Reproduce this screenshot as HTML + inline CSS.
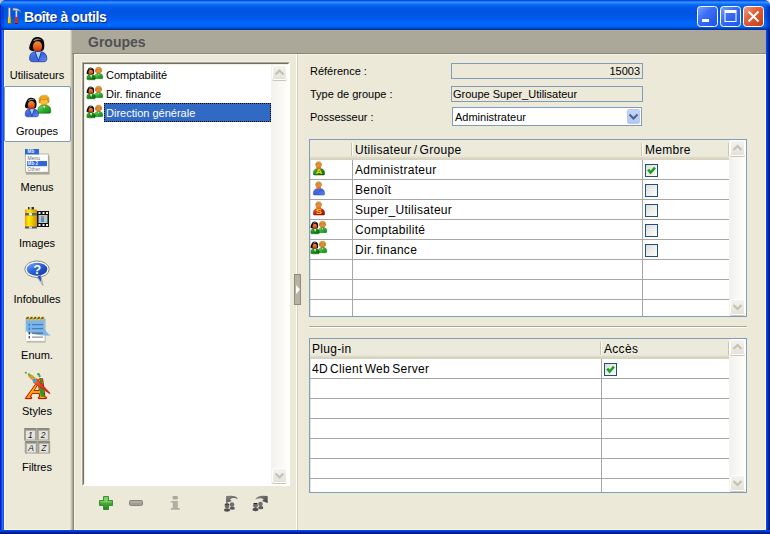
<!DOCTYPE html><html><head><meta charset="utf-8"><style>
*{box-sizing:border-box}
html,body{margin:0;padding:0;width:770px;height:534px;overflow:hidden;background:#c8c8c8}
body{font-family:"Liberation Sans",sans-serif;font-size:11px;color:#000;position:relative}
.a{position:absolute}
.t{position:absolute;white-space:nowrap;line-height:13px}
svg.i{position:absolute;overflow:visible}
</style></head><body>
<svg width="0" height="0" style="position:absolute"><defs>
<linearGradient id="gFace" x1="0" y1="0" x2="0" y2="1"><stop offset="0" stop-color="#f29038"/><stop offset="0.55" stop-color="#e25a1a"/><stop offset="1" stop-color="#c02008"/></linearGradient>
<linearGradient id="gFaceY" x1="0" y1="0" x2="0" y2="1"><stop offset="0" stop-color="#ffd050"/><stop offset="1" stop-color="#ffa820"/></linearGradient>
<linearGradient id="gFaceO" x1="0" y1="0" x2="0" y2="1"><stop offset="0" stop-color="#f8a848"/><stop offset="1" stop-color="#e06818"/></linearGradient>
<linearGradient id="gBlue" x1="0" y1="0" x2="1" y2="1"><stop offset="0" stop-color="#5a80e8"/><stop offset="0.5" stop-color="#3a62dc"/><stop offset="1" stop-color="#6a8cf0"/></linearGradient>
<linearGradient id="gGreen" x1="0" y1="0" x2="1" y2="1"><stop offset="0" stop-color="#80e070"/><stop offset="0.5" stop-color="#30b030"/><stop offset="1" stop-color="#108010"/></linearGradient>
<linearGradient id="gGreenD" x1="0" y1="0" x2="1" y2="1"><stop offset="0" stop-color="#50c050"/><stop offset="0.5" stop-color="#168a16"/><stop offset="1" stop-color="#056005"/></linearGradient>
<linearGradient id="gRed" x1="0" y1="0" x2="1" y2="1"><stop offset="0" stop-color="#f06050"/><stop offset="0.5" stop-color="#c81818"/><stop offset="1" stop-color="#900808"/></linearGradient>
<linearGradient id="gHairY" x1="0" y1="0" x2="0" y2="1"><stop offset="0" stop-color="#ffc030"/><stop offset="1" stop-color="#e08a00"/></linearGradient>
<linearGradient id="gHairB" x1="0" y1="0" x2="0" y2="1"><stop offset="0" stop-color="#e8b050"/><stop offset="1" stop-color="#b07020"/></linearGradient>
<linearGradient id="gBubble" x1="0" y1="0" x2="1" y2="1"><stop offset="0" stop-color="#80b0ff"/><stop offset="0.45" stop-color="#2c64d8"/><stop offset="1" stop-color="#0c30a0"/></linearGradient>
<linearGradient id="gYel" x1="0" y1="0" x2="1" y2="0"><stop offset="0" stop-color="#ff9800"/><stop offset="0.3" stop-color="#fff000"/><stop offset="1" stop-color="#d09000"/></linearGradient>
<linearGradient id="gArr" x1="0" y1="0" x2="1" y2="1"><stop offset="0" stop-color="#8a8a8a"/><stop offset="1" stop-color="#404040"/></linearGradient>
<linearGradient id="gStyA" x1="0" y1="0" x2="1" y2="0"><stop offset="0" stop-color="#ff8a00"/><stop offset="0.5" stop-color="#ffc000"/><stop offset="1" stop-color="#f0a000"/></linearGradient>
<linearGradient id="gBrush" x1="0" y1="0" x2="1" y2="0"><stop offset="0" stop-color="#ff6040"/><stop offset="1" stop-color="#c01000"/></linearGradient>
<linearGradient id="gPlus" x1="0" y1="0" x2="0" y2="1"><stop offset="0" stop-color="#70d050"/><stop offset="1" stop-color="#1c8a1c"/></linearGradient>
<linearGradient id="gClose" x1="0" y1="0" x2="1" y2="1"><stop offset="0" stop-color="#f2a38c"/><stop offset="0.4" stop-color="#e2603a"/><stop offset="1" stop-color="#c43c12"/></linearGradient>
<linearGradient id="gBtn" x1="0" y1="0" x2="1" y2="1"><stop offset="0" stop-color="#7ea6ff"/><stop offset="0.4" stop-color="#3a6ef5"/><stop offset="1" stop-color="#1c52e6"/></linearGradient>
</defs></svg>
<div class="a" style="left:0px;top:0px;width:10px;height:10px;background:#c0c0c0"></div>
<div class="a" style="left:760px;top:0px;width:10px;height:10px;background:#ebe8d8"></div>
<div class="a" style="left:0;top:0;width:770px;height:534px;border-radius:6px 6px 0 0;overflow:hidden;background:#0a46e0">
<div class="a" style="left:0px;top:0px;width:770px;height:30px;background:linear-gradient(to bottom,#0041d4 0px,#0a5cf5 1px,#3d95ff 2px,#2a88ff 3px,#1170fa 4px,#0362ee 6px,#0058e6 8px,#0055e3 14px,#0059ea 18px,#0064f8 22px,#0068fd 25px,#0060ef 27px,#004fd2 28px,#0036a8 29px,#0036a8 30px)"></div>
<div class="a" style="left:0px;top:5px;width:1px;height:25px;background:#0020c8"></div>
<div class="a" style="left:1px;top:6px;width:3px;height:24px;background:rgba(0,30,190,0.35)"></div>
<div class="a" style="left:766px;top:6px;width:4px;height:24px;background:linear-gradient(to right,rgba(0,40,200,0.2),rgba(0,20,120,0.6))"></div>
<div class="a" style="left:0px;top:30px;width:4px;height:504px;background:linear-gradient(to right,#0019c8 0,#0019c8 1px,#0846e4 1px,#0846e4 2px,#2d6cf2 2px,#2d6cf2 3px,#1554ea 3px)"></div>
<div class="a" style="left:766px;top:30px;width:4px;height:504px;background:linear-gradient(to right,#0046f5 0,#0046f5 1px,#0036cc 1px,#0036cc 2px,#00279e 2px,#00279e 3px,#00196e 3px)"></div>
<div class="a" style="left:0px;top:530px;width:770px;height:4px;background:linear-gradient(to bottom,#0046f5 0,#0046f5 1px,#0036cc 1px,#0036cc 2px,#00279e 2px,#00279e 3px,#00196e 3px)"></div>
</div>
<svg class="i" style="left:6px;top:7px" width="16" height="18" viewBox="0 0 16 18"><rect x="2.3" y="0.8" width="2" height="10" fill="#e8e8f0" stroke="#806878" stroke-width="0.5"/><rect x="1.9" y="9.8" width="3" height="7" rx="0.6" fill="url(#gYel)"/><rect x="1.9" y="16" width="3" height="1" fill="#c05000"/><path d="M7,1 L7,3.5 L8.8,3.3 L12,3.6 C13.2,3.8 14.5,4.8 15,5.8 C14.6,3.6 13,1.6 10.5,1.4 L8.8,1.2 Z" fill="#dcdce4" stroke="#806878" stroke-width="0.5"/><rect x="9.6" y="3.4" width="1.6" height="7" fill="#e0e0e8"/><rect x="9.1" y="9.8" width="2.7" height="7" fill="#d83010"/><rect x="9.1" y="16" width="2.7" height="1" fill="#701000"/></svg>
<div class="t" style="left:24px;top:9px;font-size:14px;letter-spacing:-0.4px;font-weight:bold;color:#fff;text-shadow:1px 1px 0 #0a2890;line-height:16px">Boîte à outils</div>
<svg class="i" style="left:697px;top:6px" width="21" height="21" viewBox="0 0 21 21"><rect x="0.5" y="0.5" width="20" height="20" rx="3" fill="url(#gBtn)" stroke="#fff"/><rect x="5" y="13" width="7" height="3" fill="#fff"/></svg>
<svg class="i" style="left:720px;top:6px" width="21" height="21" viewBox="0 0 21 21"><rect x="0.5" y="0.5" width="20" height="20" rx="3" fill="url(#gBtn)" stroke="#fff"/><rect x="5" y="4.5" width="11" height="11" fill="none" stroke="#fff" stroke-width="1"/><rect x="5" y="4.5" width="11" height="2.5" fill="#fff"/></svg>
<svg class="i" style="left:743px;top:6px" width="21" height="21" viewBox="0 0 21 21"><rect x="0.5" y="0.5" width="20" height="20" rx="3" fill="url(#gClose)" stroke="#fff"/><path d="M5.5,5.5 L15.5,15.5 M15.5,5.5 L5.5,15.5" stroke="#fff" stroke-width="2"/></svg>
<div class="a" style="left:4px;top:30px;width:762px;height:500px;background:#ece9d8"></div>
<div class="a" style="left:4px;top:30px;width:1px;height:500px;background:#fff8e4"></div>
<div class="a" style="left:4px;top:30px;width:66px;height:1px;background:#fff8e4"></div>
<div class="a" style="left:765px;top:30px;width:1px;height:500px;background:#fff8e4"></div>
<div class="a" style="left:4px;top:529px;width:762px;height:1px;background:#fff8e4"></div>
<div class="a" style="left:70px;top:30px;width:1px;height:500px;background:#ddd9c8"></div>
<div class="a" style="left:71px;top:30px;width:1px;height:500px;background:#c5c2b2"></div>
<div class="a" style="left:72px;top:30px;width:1px;height:500px;background:#aca899"></div>
<div class="a" style="left:73px;top:53px;width:1px;height:477px;background:#8a8775"></div>
<div class="a" style="left:72px;top:30px;width:694px;height:23px;background:#aca899"></div>
<div class="a" style="left:72px;top:53px;width:694px;height:1px;background:#8a8775"></div>
<div class="a" style="left:74px;top:54px;width:692px;height:1px;background:#f6f4ea"></div>
<div class="a" style="left:74px;top:54px;width:1px;height:476px;background:#f6f4ea"></div>
<div class="t" style="left:88px;top:34px;font-size:14px;font-weight:bold;color:#505055;line-height:16px">Groupes</div>
<div class="a" style="left:4px;top:86px;width:67px;height:56px;background:#fff;border:1px solid #7e9cb8;border-radius:2px"></div>
<div class="t" style="left:4px;width:66px;text-align:center;top:69px">Utilisateurs</div>
<div class="t" style="left:4px;width:66px;text-align:center;top:125px">Groupes</div>
<div class="t" style="left:4px;width:66px;text-align:center;top:181px">Menus</div>
<div class="t" style="left:4px;width:66px;text-align:center;top:237px">Images</div>
<div class="t" style="left:4px;width:66px;text-align:center;top:293px">Infobulles</div>
<div class="t" style="left:4px;width:66px;text-align:center;top:349px">Enum.</div>
<div class="t" style="left:4px;width:66px;text-align:center;top:405px">Styles</div>
<div class="t" style="left:4px;width:66px;text-align:center;top:461px">Filtres</div>
<svg class="i" style="left:28px;top:36px" width="20" height="26" viewBox="0 0 20 26"><path d="M5,15 C2.5,15 0.8,13.5 1.2,11.5 C1.6,9 2.5,7 3.5,5 C4.5,2.5 6.5,1 9,1 C12.5,1 15.5,2.8 16,6 C16.5,9 16.5,12.5 15.5,14 C14.5,15 13,15 12,15 Z" fill="#0a0a0a"/><path d="M5.5,4.5 C7,2.3 11,2 13.8,4 C11.5,3.5 8,3.8 5.5,5.5 Z" fill="#8a8a8a"/><path d="M9.5,5.3 C12.3,5.3 14,7.3 14,10.3 C14,13.8 12,16.5 9.5,16.5 C7,16.5 5,13.8 5,10.3 C5,7.3 6.8,5.3 9.5,5.3 Z" fill="url(#gFace)"/><path d="M1.6,22.3 C1.6,18.5 3.4,16.1 6.5,15.7 L13,15.7 C16.4,16.1 18.8,18.5 18.8,22.3 C18.8,24.6 17.8,25.7 16,25.7 L4.4,25.7 C2.6,25.7 1.6,24.6 1.6,22.3 Z" fill="url(#gBlue)" stroke="#18389a" stroke-width="0.8"/><path d="M7.6,15.9 L10.3,23.5 L13,15.9 Z" fill="#a8dcff"/><path d="M7.2,16 L10.3,25.2 L13.4,16" fill="none" stroke="#18389a" stroke-width="0.8"/></svg>
<svg class="i" style="left:36.56px;top:95.1px" width="14.0" height="18.2" viewBox="0 0 20 26"><path d="M3.2,11.5 C2.2,7 2.8,3 6,1.2 C8,0 12,-0.2 14.5,1 C17.2,2.5 17.8,6.5 16.8,11 Z" fill="url(#gHairY)" stroke="#b86800" stroke-width="0.6"/><ellipse cx="10.1" cy="10.2" rx="5.3" ry="6" fill="url(#gFaceY)"/><path d="M4.2,9 C4,5 6,2.6 10,2.5 C14,2.6 16,5 16,9 C15,7 14.2,6 13.5,5.5 L12.5,7.2 L11.2,5.8 L10,7.4 L8.8,5.8 L7.5,7.2 L6.6,5.8 C5.6,6.5 4.8,7.8 4.2,9 Z" fill="url(#gHairY)" stroke="#b86800" stroke-width="0.5"/><path d="M1.2,25 C0.8,21 1.5,17.5 4.5,15.8 C6,15 7.5,14.6 8.5,14.6 L12,14.6 C13.5,14.6 15,15 16.5,15.8 C19.5,17.5 20,21 19.5,25 C19.2,25.8 18.5,26 18,26 L2.5,26 C1.8,26 1.3,25.6 1.2,25 Z" fill="url(#gGreen)" stroke="#0a6a0a" stroke-width="0.8"/><path d="M8.2,15 L10.2,20.5 L12.2,15 Z" fill="#ffffff" stroke="#0a6a0a" stroke-width="0.5"/></svg>
<svg class="i" style="left:24.3px;top:96.9px" width="15.4" height="20.02" viewBox="0 0 20 26"><path d="M5,15 C2.5,15 0.8,13.5 1.2,11.5 C1.6,9 2.5,7 3.5,5 C4.5,2.5 6.5,1 9,1 C12.5,1 15.5,2.8 16,6 C16.5,9 16.5,12.5 15.5,14 C14.5,15 13,15 12,15 Z" fill="#0a0a0a"/><path d="M5.5,4.5 C7,2.3 11,2 13.8,4 C11.5,3.5 8,3.8 5.5,5.5 Z" fill="#8a8a8a"/><path d="M9.5,5.3 C12.3,5.3 14,7.3 14,10.3 C14,13.8 12,16.5 9.5,16.5 C7,16.5 5,13.8 5,10.3 C5,7.3 6.8,5.3 9.5,5.3 Z" fill="url(#gFace)"/><path d="M1.6,22.3 C1.6,18.5 3.4,16.1 6.5,15.7 L13,15.7 C16.4,16.1 18.8,18.5 18.8,22.3 C18.8,24.6 17.8,25.7 16,25.7 L4.4,25.7 C2.6,25.7 1.6,24.6 1.6,22.3 Z" fill="url(#gBlue)" stroke="#18389a" stroke-width="0.8"/><path d="M7.6,15.9 L10.3,23.5 L13,15.9 Z" fill="#a8dcff"/><path d="M7.2,16 L10.3,25.2 L13.4,16" fill="none" stroke="#18389a" stroke-width="0.8"/></svg>
<svg class="i" style="left:24px;top:148px" width="28" height="28" viewBox="0 0 28 28"><rect x="2" y="8" width="23.5" height="18.5" fill="#8e8a78" opacity="0.75"/><rect x="1.3" y="6" width="23" height="18.2" fill="#fff" stroke="#aaa696" stroke-width="0.8"/><rect x="1" y="1" width="14" height="5.4" fill="#2e68d0"/><text x="3.6" y="5" font-family="Liberation Sans" font-weight="bold" font-size="4.6" fill="#e8f0ff">Mb</text><text x="3.6" y="11.8" font-family="Liberation Sans" font-size="5" fill="#666">Menu</text><rect x="3" y="13" width="20" height="5.2" fill="#2e68d0"/><text x="3.6" y="17.2" font-family="Liberation Sans" font-weight="bold" font-size="4.6" fill="#e8f0ff">Mb 2</text><text x="3.6" y="22.8" font-family="Liberation Sans" font-size="5" fill="#777">Other</text></svg>
<svg class="i" style="left:24px;top:206px" width="26" height="24" viewBox="0 0 26 24"><rect x="13" y="5" width="12" height="16" fill="#111"/><rect x="14.5" y="9" width="9" height="8" fill="#b8c8c8"/><rect x="17" y="10" width="3" height="6" fill="#5090d0"/><rect x="17.5" y="10" width="2" height="2" fill="#e08080"/><rect x="14.5" y="6" width="2" height="2" fill="#eee"/><rect x="18.5" y="6" width="2" height="2" fill="#eee"/><rect x="22" y="6" width="2" height="2" fill="#eee"/><rect x="14.5" y="18" width="2" height="2" fill="#eee"/><rect x="18.5" y="18" width="2" height="2" fill="#eee"/><rect x="22" y="18" width="2" height="2" fill="#eee"/><rect x="4" y="1" width="6" height="3" fill="#333"/><rect x="5.5" y="1" width="2" height="3" fill="#ddd"/><rect x="1" y="3.5" width="12" height="18.5" fill="url(#gYel)"/><rect x="1" y="7" width="12" height="2.5" fill="#606870"/><rect x="5" y="7" width="3" height="2.5" fill="#e8e8e8"/><rect x="1" y="20.5" width="12" height="2" fill="#505860"/><rect x="5" y="20.5" width="3" height="2" fill="#ddd"/></svg>
<svg class="i" style="left:24px;top:260px" width="27" height="27" viewBox="0 0 27 27"><path d="M12,16 L19,25.5 L17,16 Z" fill="#fff" stroke="#9a9890" stroke-width="0.8"/><ellipse cx="13" cy="9.2" rx="12.2" ry="8.2" fill="#fff" stroke="#8a8880" stroke-width="1"/><ellipse cx="13" cy="9.2" rx="10.3" ry="6.5" fill="url(#gBubble)"/><path d="M13.5,17 L17.5,22.5 L16.5,15 Z" fill="#2050c0"/><text x="13.2" y="14.2" font-family="Liberation Sans" font-weight="bold" font-size="13" fill="#fff" text-anchor="middle">?</text></svg>
<svg class="i" style="left:24px;top:316px" width="28" height="28" viewBox="0 0 28 28"><rect x="2.6" y="3" width="19" height="23.6" fill="#908c7a" opacity="0.55"/><rect x="1.8" y="2" width="19" height="23" fill="#fff" stroke="#d0d0d0" stroke-width="0.5"/><path d="M1.8,2 L20.8,2 L20.8,13 C22.5,16 24.5,18.5 27,19.5 L20.8,19.5 C15,19.5 8,18 3,16 L1.8,15 Z" fill="#7ab6ea"/><rect x="8" y="8.2" width="11" height="1" fill="#3a70b0"/><rect x="8" y="12.2" width="11" height="1" fill="#3a70b0"/><rect x="8" y="16.6" width="11" height="1" fill="#555"/><rect x="8" y="20.6" width="11" height="1" fill="#777"/><rect x="4.6" y="7.6" width="1.4" height="2.4" fill="#4a7ab0"/><rect x="4.6" y="11.6" width="1.4" height="2.4" fill="#4a7ab0"/><rect x="4.6" y="16" width="1.4" height="2.4" fill="#333"/><rect x="4.6" y="20" width="1.4" height="2.4" fill="#555"/><rect x="2.4" y="0.4" width="2.4" height="4.2" rx="0.6" fill="#f0c020"/><path d="M2.4,1.8 L4.8,0.8 L4.8,2.2 L2.4,3.2 Z" fill="#3a2a00" opacity="0.8"/><rect x="6.1" y="0.4" width="2.4" height="4.2" rx="0.6" fill="#f0c020"/><path d="M6.1,1.8 L8.5,0.8 L8.5,2.2 L6.1,3.2 Z" fill="#3a2a00" opacity="0.8"/><rect x="9.8" y="0.4" width="2.4" height="4.2" rx="0.6" fill="#f0c020"/><path d="M9.8,1.8 L12.2,0.8 L12.2,2.2 L9.8,3.2 Z" fill="#3a2a00" opacity="0.8"/><rect x="13.500000000000002" y="0.4" width="2.4" height="4.2" rx="0.6" fill="#f0c020"/><path d="M13.500000000000002,1.8 L15.900000000000002,0.8 L15.900000000000002,2.2 L13.500000000000002,3.2 Z" fill="#3a2a00" opacity="0.8"/><rect x="17.2" y="0.4" width="2.4" height="4.2" rx="0.6" fill="#f0c020"/><path d="M17.2,1.8 L19.6,0.8 L19.6,2.2 L17.2,3.2 Z" fill="#3a2a00" opacity="0.8"/></svg>
<svg class="i" style="left:24px;top:370px" width="28" height="30" viewBox="0 0 28 30"><path d="M1.2,28.6 L7.6,28.6 L7.6,27 L6.2,27 L8.4,23.4 L15.2,23.4 L15.7,27 L14.4,27 L14.4,28.6 L22.4,28.6 L22.4,27 L20.9,27 L18.6,8.8 L15.4,8.8 Z M10,20.6 L14.6,13.2 L15.2,20.6 Z" fill="url(#gStyA)" stroke="#c00800" stroke-width="1"/><path d="M15.6,9.3 L18.2,9.3 L20.4,26.8 L16.8,26.8 L15.6,20 Z" fill="#2a9a20"/><path d="M9.4,12.4 L12.6,8.6 L26.2,23.2 L25.6,23.8 Z" fill="url(#gBrush)" stroke="#a01000" stroke-width="0.4"/><circle cx="10.4" cy="10.4" r="1.9" fill="#38a8e8"/><path d="M9,9.8 C6.5,9 4.4,6.6 4.2,4.2 C6.8,4.2 10,6 11.4,8.4 Z" fill="#d8a020" stroke="#a07000" stroke-width="0.4"/><path d="M4.2,4.2 C5,4.3 6,4.8 6.8,5.5 L5.2,6.2 Z" fill="#60b030"/><circle cx="1.8" cy="2.8" r="1" fill="#40a040"/><circle cx="4.9" cy="4" r="0.8" fill="#40a040"/><circle cx="14.5" cy="4.2" r="1.3" fill="#40a040"/><circle cx="15.6" cy="6.2" r="1.1" fill="#40a040"/></svg>
<svg class="i" style="left:24px;top:428px" width="27" height="27" viewBox="0 0 27 27"><rect x="0" y="0" width="12.8" height="13" rx="1.2" fill="#a3a193"/><path d="M0,0 L12.8,0 L10.8,2.6 L2,2.6 Z" fill="#8c8a7c"/><path d="M0,13 L12.8,13 L11.0,11.4 L2,11.4 Z" fill="#c4c2b4"/><rect x="2" y="2.6" width="9.0" height="8.8" fill="#e4e4e0"/><text x="6.4" y="10" font-family="Liberation Sans" font-style="italic" font-size="8.5" fill="#1a1a1a" text-anchor="middle">1</text><rect x="12.8" y="0" width="12.8" height="13" rx="1.2" fill="#a3a193"/><path d="M12.8,0 L25.6,0 L23.6,2.6 L14.8,2.6 Z" fill="#8c8a7c"/><path d="M12.8,13 L25.6,13 L23.8,11.4 L14.8,11.4 Z" fill="#c4c2b4"/><rect x="14.8" y="2.6" width="9.0" height="8.8" fill="#e4e4e0"/><text x="19.200000000000003" y="10" font-family="Liberation Sans" font-style="italic" font-size="8.5" fill="#1a1a1a" text-anchor="middle">2</text><rect x="0.8" y="13" width="12.8" height="13" rx="1.2" fill="#a3a193"/><path d="M0.8,13 L13.600000000000001,13 L11.600000000000001,15.6 L2.8,15.6 Z" fill="#8c8a7c"/><path d="M0.8,26 L13.600000000000001,26 L11.8,24.4 L2.8,24.4 Z" fill="#c4c2b4"/><rect x="2.8" y="15.6" width="9.0" height="8.8" fill="#e4e4e0"/><text x="7.2" y="23" font-family="Liberation Sans" font-style="italic" font-size="8.5" fill="#1a1a1a" text-anchor="middle">A</text><rect x="13.4" y="13" width="12.8" height="13" rx="1.2" fill="#a3a193"/><path d="M13.4,13 L26.200000000000003,13 L24.200000000000003,15.6 L15.4,15.6 Z" fill="#8c8a7c"/><path d="M13.4,26 L26.200000000000003,26 L24.400000000000002,24.4 L15.4,24.4 Z" fill="#c4c2b4"/><rect x="15.4" y="15.6" width="9.0" height="8.8" fill="#e4e4e0"/><text x="19.8" y="23" font-family="Liberation Sans" font-style="italic" font-size="8.5" fill="#1a1a1a" text-anchor="middle">Z</text></svg>
<div class="a" style="left:81px;top:61px;width:209px;height:1px;background:#f3f0e3"></div>
<div class="a" style="left:81px;top:61px;width:1px;height:425px;background:#f3f0e3"></div>
<div class="a" style="left:82px;top:62px;width:208px;height:424px;background:#fff;border-top:1px solid #aca899;border-left:1px solid #aca899;border-right:1px solid #fff;border-bottom:1px solid #fff"></div>
<div class="a" style="left:83px;top:63px;width:206px;height:422px;border-top:1px solid #716f64;border-left:1px solid #716f64;border-right:1px solid #fff;border-bottom:1px solid #fff"></div>
<div class="a" style="left:84px;top:64px;width:1px;height:420px;background:#f1efe2"></div>
<div class="a" style="left:84px;top:64px;width:204px;height:1px;background:#f1efe2"></div>
<div class="a" style="left:271px;top:65px;width:17px;height:419px;background:linear-gradient(to right,#f3f1ec,#fefefb)"></div>
<div class="a" style="left:272px;top:65px;width:15px;height:15px;background:linear-gradient(to bottom,#f4f3ee,#e4e2d8);border:1px solid #fff;border-radius:2px;box-shadow:0 1px 0 #c9c7ba"></div>
<svg class="i" style="left:0;top:0" width="770" height="534"><polyline points="275.5,74.5 279.5,70.5 283.5,74.5" fill="none" stroke="#c3c2b8" stroke-width="2.2"/></svg>
<div class="a" style="left:272px;top:468px;width:15px;height:15px;background:linear-gradient(to bottom,#f4f3ee,#e4e2d8);border:1px solid #fff;border-radius:2px;box-shadow:0 1px 0 #c9c7ba"></div>
<svg class="i" style="left:0;top:0" width="770" height="534"><polyline points="275.5,473.5 279.5,477.5 283.5,473.5" fill="none" stroke="#c3c2b8" stroke-width="2.2"/></svg>
<svg class="i" style="left:93.96000000000001px;top:67px" width="9.0" height="11.700000000000001" viewBox="0 0 20 26"><path d="M3.2,11.5 C2.2,7 2.8,3 6,1.2 C8,0 12,-0.2 14.5,1 C17.2,2.5 17.8,6.5 16.8,11 Z" fill="url(#gHairB)" stroke="#a06010" stroke-width="0.6"/><ellipse cx="10.1" cy="10.2" rx="5.3" ry="6" fill="url(#gFaceO)"/><path d="M4.2,9 C4,5 6,2.6 10,2.5 C14,2.6 16,5 16,9 C15,7 14.2,6 13.5,5.5 L12.5,7.2 L11.2,5.8 L10,7.4 L8.8,5.8 L7.5,7.2 L6.6,5.8 C5.6,6.5 4.8,7.8 4.2,9 Z" fill="url(#gHairB)" stroke="#a06010" stroke-width="0.5"/><path d="M1.2,25 C0.8,21 1.5,17.5 4.5,15.8 C6,15 7.5,14.6 8.5,14.6 L12,14.6 C13.5,14.6 15,15 16.5,15.8 C19.5,17.5 20,21 19.5,25 C19.2,25.8 18.5,26 18,26 L2.5,26 C1.8,26 1.3,25.6 1.2,25 Z" fill="url(#gGreen)" stroke="#0a6a0a" stroke-width="0.8"/><path d="M8.2,15 L10.2,20.5 L12.2,15 Z" fill="#d0f0d0" stroke="#0a6a0a" stroke-width="0.5"/></svg>
<svg class="i" style="left:86.4px;top:66.95px" width="10.0" height="13.0" viewBox="0 0 20 26"><path d="M5,15 C2.5,15 0.8,13.5 1.2,11.5 C1.6,9 2.5,7 3.5,5 C4.5,2.5 6.5,1 9,1 C12.5,1 15.5,2.8 16,6 C16.5,9 16.5,12.5 15.5,14 C14.5,15 13,15 12,15 Z" fill="#0a0a0a"/><path d="M5.5,4.5 C7,2.3 11,2 13.8,4 C11.5,3.5 8,3.8 5.5,5.5 Z" fill="#8a8a8a"/><path d="M9.5,5.3 C12.3,5.3 14,7.3 14,10.3 C14,13.8 12,16.5 9.5,16.5 C7,16.5 5,13.8 5,10.3 C5,7.3 6.8,5.3 9.5,5.3 Z" fill="url(#gFace)"/><path d="M1.6,22.3 C1.6,18.5 3.4,16.1 6.5,15.7 L13,15.7 C16.4,16.1 18.8,18.5 18.8,22.3 C18.8,24.6 17.8,25.7 16,25.7 L4.4,25.7 C2.6,25.7 1.6,24.6 1.6,22.3 Z" fill="url(#gGreenD)" stroke="#0a5a0a" stroke-width="0.8"/><path d="M7.6,15.9 L10.3,23.5 L13,15.9 Z" fill="#d0f0d0"/><path d="M7.2,16 L10.3,25.2 L13.4,16" fill="none" stroke="#0a5a0a" stroke-width="0.8"/></svg>
<div class="t" style="left:106px;top:69px;">Comptabilité</div>
<svg class="i" style="left:93.96000000000001px;top:86px" width="9.0" height="11.700000000000001" viewBox="0 0 20 26"><path d="M3.2,11.5 C2.2,7 2.8,3 6,1.2 C8,0 12,-0.2 14.5,1 C17.2,2.5 17.8,6.5 16.8,11 Z" fill="url(#gHairB)" stroke="#a06010" stroke-width="0.6"/><ellipse cx="10.1" cy="10.2" rx="5.3" ry="6" fill="url(#gFaceO)"/><path d="M4.2,9 C4,5 6,2.6 10,2.5 C14,2.6 16,5 16,9 C15,7 14.2,6 13.5,5.5 L12.5,7.2 L11.2,5.8 L10,7.4 L8.8,5.8 L7.5,7.2 L6.6,5.8 C5.6,6.5 4.8,7.8 4.2,9 Z" fill="url(#gHairB)" stroke="#a06010" stroke-width="0.5"/><path d="M1.2,25 C0.8,21 1.5,17.5 4.5,15.8 C6,15 7.5,14.6 8.5,14.6 L12,14.6 C13.5,14.6 15,15 16.5,15.8 C19.5,17.5 20,21 19.5,25 C19.2,25.8 18.5,26 18,26 L2.5,26 C1.8,26 1.3,25.6 1.2,25 Z" fill="url(#gGreen)" stroke="#0a6a0a" stroke-width="0.8"/><path d="M8.2,15 L10.2,20.5 L12.2,15 Z" fill="#d0f0d0" stroke="#0a6a0a" stroke-width="0.5"/></svg>
<svg class="i" style="left:86.4px;top:85.95px" width="10.0" height="13.0" viewBox="0 0 20 26"><path d="M5,15 C2.5,15 0.8,13.5 1.2,11.5 C1.6,9 2.5,7 3.5,5 C4.5,2.5 6.5,1 9,1 C12.5,1 15.5,2.8 16,6 C16.5,9 16.5,12.5 15.5,14 C14.5,15 13,15 12,15 Z" fill="#0a0a0a"/><path d="M5.5,4.5 C7,2.3 11,2 13.8,4 C11.5,3.5 8,3.8 5.5,5.5 Z" fill="#8a8a8a"/><path d="M9.5,5.3 C12.3,5.3 14,7.3 14,10.3 C14,13.8 12,16.5 9.5,16.5 C7,16.5 5,13.8 5,10.3 C5,7.3 6.8,5.3 9.5,5.3 Z" fill="url(#gFace)"/><path d="M1.6,22.3 C1.6,18.5 3.4,16.1 6.5,15.7 L13,15.7 C16.4,16.1 18.8,18.5 18.8,22.3 C18.8,24.6 17.8,25.7 16,25.7 L4.4,25.7 C2.6,25.7 1.6,24.6 1.6,22.3 Z" fill="url(#gGreenD)" stroke="#0a5a0a" stroke-width="0.8"/><path d="M7.6,15.9 L10.3,23.5 L13,15.9 Z" fill="#d0f0d0"/><path d="M7.2,16 L10.3,25.2 L13.4,16" fill="none" stroke="#0a5a0a" stroke-width="0.8"/></svg>
<div class="t" style="left:106px;top:88px;">Dir. finance</div>
<svg class="i" style="left:93.96000000000001px;top:105px" width="9.0" height="11.700000000000001" viewBox="0 0 20 26"><path d="M3.2,11.5 C2.2,7 2.8,3 6,1.2 C8,0 12,-0.2 14.5,1 C17.2,2.5 17.8,6.5 16.8,11 Z" fill="url(#gHairB)" stroke="#a06010" stroke-width="0.6"/><ellipse cx="10.1" cy="10.2" rx="5.3" ry="6" fill="url(#gFaceO)"/><path d="M4.2,9 C4,5 6,2.6 10,2.5 C14,2.6 16,5 16,9 C15,7 14.2,6 13.5,5.5 L12.5,7.2 L11.2,5.8 L10,7.4 L8.8,5.8 L7.5,7.2 L6.6,5.8 C5.6,6.5 4.8,7.8 4.2,9 Z" fill="url(#gHairB)" stroke="#a06010" stroke-width="0.5"/><path d="M1.2,25 C0.8,21 1.5,17.5 4.5,15.8 C6,15 7.5,14.6 8.5,14.6 L12,14.6 C13.5,14.6 15,15 16.5,15.8 C19.5,17.5 20,21 19.5,25 C19.2,25.8 18.5,26 18,26 L2.5,26 C1.8,26 1.3,25.6 1.2,25 Z" fill="url(#gGreen)" stroke="#0a6a0a" stroke-width="0.8"/><path d="M8.2,15 L10.2,20.5 L12.2,15 Z" fill="#d0f0d0" stroke="#0a6a0a" stroke-width="0.5"/></svg>
<svg class="i" style="left:86.4px;top:104.95px" width="10.0" height="13.0" viewBox="0 0 20 26"><path d="M5,15 C2.5,15 0.8,13.5 1.2,11.5 C1.6,9 2.5,7 3.5,5 C4.5,2.5 6.5,1 9,1 C12.5,1 15.5,2.8 16,6 C16.5,9 16.5,12.5 15.5,14 C14.5,15 13,15 12,15 Z" fill="#0a0a0a"/><path d="M5.5,4.5 C7,2.3 11,2 13.8,4 C11.5,3.5 8,3.8 5.5,5.5 Z" fill="#8a8a8a"/><path d="M9.5,5.3 C12.3,5.3 14,7.3 14,10.3 C14,13.8 12,16.5 9.5,16.5 C7,16.5 5,13.8 5,10.3 C5,7.3 6.8,5.3 9.5,5.3 Z" fill="url(#gFace)"/><path d="M1.6,22.3 C1.6,18.5 3.4,16.1 6.5,15.7 L13,15.7 C16.4,16.1 18.8,18.5 18.8,22.3 C18.8,24.6 17.8,25.7 16,25.7 L4.4,25.7 C2.6,25.7 1.6,24.6 1.6,22.3 Z" fill="url(#gGreenD)" stroke="#0a5a0a" stroke-width="0.8"/><path d="M7.6,15.9 L10.3,23.5 L13,15.9 Z" fill="#d0f0d0"/><path d="M7.2,16 L10.3,25.2 L13.4,16" fill="none" stroke="#0a5a0a" stroke-width="0.8"/></svg>
<div class="a" style="left:104px;top:103px;width:167px;height:19px;background:#316ac5;outline:1px dotted #000;outline-offset:-1px"></div>
<div class="t" style="left:106px;top:107px;color:#fff">Direction générale</div>
<svg class="i" style="left:99px;top:496px" width="14" height="14" viewBox="0 0 14 14"><path d="M4.5,0.5 L9.5,0.5 L9.5,4.5 L13.5,4.5 L13.5,9.5 L9.5,9.5 L9.5,13.5 L4.5,13.5 L4.5,9.5 L0.5,9.5 L0.5,4.5 L4.5,4.5 Z" fill="url(#gPlus)" stroke="#2a7a2a" stroke-width="0.8" stroke-linejoin="round"/><path d="M5.3,1.4 L8.7,1.4 L8.7,5.3 L12.6,5.3 L12.6,6.6 L1.4,6.6 L1.4,5.3 L5.3,5.3 Z" fill="#9ee080" opacity="0.55"/></svg>
<svg class="i" style="left:129px;top:500px" width="14" height="6" viewBox="0 0 14 6"><rect x="0.5" y="0.5" width="13" height="5" rx="1" fill="#a09e94" stroke="#858378" stroke-width="0.9"/><rect x="1.5" y="1.3" width="11" height="1.4" fill="#b4b2a8"/></svg>
<svg class="i" style="left:170px;top:495px" width="10" height="15" viewBox="0 0 10 15"><rect x="2.6" y="0.9" width="5.2" height="3.6" rx="1.2" fill="#aaa89c"/><path d="M0.6,6.6 L2.6,6 L7.8,6 L7.8,13 L9.8,13 L9.8,14.8 L0.8,14.8 L0.8,13 L2.8,13 L2.8,7.4 L0.6,7.4 Z" fill="#b0aea2"/></svg>
<svg class="i" style="left:222px;top:492px" width="22" height="22" viewBox="0 0 22 22"><path d="M4,4 L4,11 L9.7,8.9 L8,7.4 C9.8,6 12.5,5.6 16,6.8 C14.5,4.6 12,3.8 9,3.8 Z" fill="url(#gArr)"/><circle cx="10" cy="12.6" r="2.3" fill="#707070"/><ellipse cx="10.3" cy="16.2" rx="2.6" ry="1.6" fill="#5a5a5a"/><circle cx="5" cy="14" r="2.4" fill="#6a6a6a"/><path d="M2.6,12.8 C3,11 7,11 7.4,12.8 C6,12 4,12 2.6,12.8Z" fill="#111"/><ellipse cx="5" cy="18" rx="3" ry="1.7" fill="#505050"/></svg>
<svg class="i" style="left:250px;top:492px" width="22" height="22" viewBox="0 0 22 22"><path d="M17.7,4 L17.7,11 L12,8.9 L13.7,7.4 C11.9,6 9,6 5.2,7.6 C6.8,4.8 9.7,3.8 12.7,3.8 Z" fill="url(#gArr)"/><g transform="translate(0.5,-0.5)"><circle cx="10" cy="12.6" r="2.3" fill="#707070"/><ellipse cx="10.3" cy="16.2" rx="2.6" ry="1.6" fill="#5a5a5a"/><circle cx="5" cy="14" r="2.4" fill="#6a6a6a"/><path d="M2.6,12.8 C3,11 7,11 7.4,12.8 C6,12 4,12 2.6,12.8Z" fill="#111"/><ellipse cx="5" cy="18" rx="3" ry="1.7" fill="#505050"/></g></svg>
<div class="a" style="left:296px;top:54px;width:1px;height:476px;background:#fbfaf4"></div>
<div class="a" style="left:297px;top:54px;width:1px;height:476px;background:#d6d2c2"></div>
<div class="a" style="left:294px;top:274px;width:7px;height:31px;background:#b6b3a3;border:1px solid #8e8b7a"></div>
<svg class="i" style="left:0;top:0" width="770" height="534"><polygon points="296,285 300,289.5 296,294" fill="#fff"/></svg>
<div class="t" style="left:310px;top:65px;">Référence :</div>
<div class="t" style="left:310px;top:88px;">Type de groupe :</div>
<div class="t" style="left:310px;top:111px;">Possesseur :</div>
<div class="a" style="left:451px;top:63px;width:192px;height:16px;border:1px solid #7f9db9;background:#ece9d8"></div>
<div class="t" style="left:560px;top:65px;width:80px;text-align:right;left:560px;font-size:11px">15003</div>
<div class="a" style="left:451px;top:86px;width:192px;height:16px;border:1px solid #7f9db9;background:#ece9d8"></div>
<div class="t" style="left:453px;top:88px;">Groupe Super_Utilisateur</div>
<div class="a" style="left:452px;top:107px;width:190px;height:19px;border:1px solid #7f9db9;background:#fff"></div>
<div class="t" style="left:455px;top:111px;">Administrateur</div>
<div class="a" style="left:627px;top:109px;width:13px;height:15px;background:linear-gradient(to bottom,#c6d4f7,#b4c6f5);border:1px solid #b9c9ef;border-radius:2px"></div>
<svg class="i" style="left:0;top:0" width="770" height="534"><polyline points="629.5,114.5 633.5,118.5 637.5,114.5" fill="none" stroke="#4d6185" stroke-width="2"/></svg>
<div class="a" style="left:309px;top:139px;width:438px;height:178px;border:1px solid #7f9db9;background:#fff"></div>
<div class="a" style="left:310px;top:140px;width:1px;height:176px;background:#e4e4e4"></div>
<div class="a" style="left:310px;top:140px;width:419px;height:20px;background:linear-gradient(to bottom,#ebeadb 0,#ebeadb 16px,#e2dfcd 17px,#d6d2bf 19px)"></div>
<div class="a" style="left:729px;top:140px;width:17px;height:176px;background:linear-gradient(to right,#f3f1ec,#fefefb)"></div>
<div class="a" style="left:730px;top:140px;width:15px;height:16px;background:linear-gradient(to bottom,#f4f3ee,#e4e2d8);border:1px solid #fff;border-radius:2px;box-shadow:0 1px 0 #c9c7ba"></div>
<svg class="i" style="left:0;top:0" width="770" height="534"><polyline points="733.5,150.0 737.5,146.0 741.5,150.0" fill="none" stroke="#c3c2b8" stroke-width="2.2"/></svg>
<div class="a" style="left:730px;top:299px;width:15px;height:16px;background:linear-gradient(to bottom,#f4f3ee,#e4e2d8);border:1px solid #fff;border-radius:2px;box-shadow:0 1px 0 #c9c7ba"></div>
<svg class="i" style="left:0;top:0" width="770" height="534"><polyline points="733.5,305.0 737.5,309.0 741.5,305.0" fill="none" stroke="#c3c2b8" stroke-width="2.2"/></svg>
<div class="a" style="left:351px;top:143px;width:1px;height:13px;background:#c7c5b2"></div>
<div class="a" style="left:352px;top:143px;width:1px;height:13px;background:#fff"></div>
<div class="a" style="left:641px;top:143px;width:1px;height:13px;background:#c7c5b2"></div>
<div class="a" style="left:642px;top:143px;width:1px;height:13px;background:#fff"></div>
<div class="a" style="left:728px;top:143px;width:1px;height:13px;background:#c7c5b2"></div>
<div class="a" style="left:729px;top:143px;width:1px;height:13px;background:#fff"></div>
<div class="a" style="left:310px;top:179px;width:419px;height:1px;background:#a6a6a6"></div>
<div class="a" style="left:310px;top:199px;width:419px;height:1px;background:#a6a6a6"></div>
<div class="a" style="left:310px;top:219px;width:419px;height:1px;background:#a6a6a6"></div>
<div class="a" style="left:310px;top:239px;width:419px;height:1px;background:#a6a6a6"></div>
<div class="a" style="left:310px;top:259px;width:419px;height:1px;background:#a6a6a6"></div>
<div class="a" style="left:310px;top:279px;width:419px;height:1px;background:#a6a6a6"></div>
<div class="a" style="left:310px;top:299px;width:419px;height:1px;background:#a6a6a6"></div>
<div class="a" style="left:352px;top:160px;width:1px;height:156px;background:#a6a6a6"></div>
<div class="a" style="left:642px;top:160px;width:1px;height:156px;background:#a6a6a6"></div>
<div class="t" style="left:312px;top:143px;font-size:12px;line-height:14px;letter-spacing:0.3px;word-spacing:-1.5px"></div>
<div class="t" style="left:355px;top:143px;font-size:12px;line-height:14px;letter-spacing:0.3px;word-spacing:-1.5px">Utilisateur / Groupe</div>
<div class="t" style="left:645px;top:143px;font-size:12px;line-height:14px;letter-spacing:0.3px;word-spacing:-1.5px">Membre</div>
<svg class="i" style="left:313px;top:160.5px" width="12" height="15" viewBox="0 0 12 15"><path d="M0.4,13.2 C0.2,10.5 1,8.6 3,7.9 C4,7.5 5,7.5 6,7.5 C7,7.5 8,7.5 9,7.9 C11,8.6 11.8,10.5 11.6,13.2 C11.4,13.9 10.9,14 10.4,14 L1.6,14 C1.1,14 0.6,13.9 0.4,13.2 Z" fill="url(#gGreenD)" stroke="#0a5a0a" stroke-width="0.5"/><ellipse cx="5.6" cy="5" rx="2.6" ry="3.1" fill="url(#gFaceO)"/><path d="M2.6,4.8 C2.2,2.2 3.5,0.6 5.6,0.6 C7.7,0.6 9,2.2 8.6,4.8 C8,3.4 7,2.8 6,3.2 C5,2.6 3.6,3.2 2.6,4.8Z" fill="url(#gHairB)" stroke="#a06818" stroke-width="0.3"/><text x="0" y="0" transform="translate(5.8,13.4) scale(1.35,1)" font-family="Liberation Sans" font-weight="bold" font-size="7" fill="#ffd000" text-anchor="middle">A</text></svg>
<div class="t" style="left:355px;top:163px;font-size:12px;line-height:14px;letter-spacing:0.3px;word-spacing:-1.5px">Administrateur</div>
<div class="a" style="left:645px;top:164px;width:13px;height:13px;border:1px solid #1c5180;background:linear-gradient(135deg,#dcdcd7,#fff)"></div>
<svg class="i" style="left:0;top:0" width="770" height="534"><polyline points="648.2,169.6 650.6,172.6 655,167.6" fill="none" stroke="#21a121" stroke-width="2.6"/></svg>
<svg class="i" style="left:313px;top:180.5px" width="12" height="15" viewBox="0 0 12 15"><path d="M0.4,13.2 C0.2,10.5 1,8.6 3,7.9 C4,7.5 5,7.5 6,7.5 C7,7.5 8,7.5 9,7.9 C11,8.6 11.8,10.5 11.6,13.2 C11.4,13.9 10.9,14 10.4,14 L1.6,14 C1.1,14 0.6,13.9 0.4,13.2 Z" fill="url(#gBlue)" stroke="#1a3a9a" stroke-width="0.5"/><ellipse cx="5.6" cy="5" rx="2.6" ry="3.1" fill="url(#gFaceO)"/><path d="M2.6,4.8 C2.2,2.2 3.5,0.6 5.6,0.6 C7.7,0.6 9,2.2 8.6,4.8 C8,3.4 7,2.8 6,3.2 C5,2.6 3.6,3.2 2.6,4.8Z" fill="url(#gHairB)" stroke="#a06818" stroke-width="0.3"/></svg>
<div class="t" style="left:355px;top:183px;font-size:12px;line-height:14px;letter-spacing:0.3px;word-spacing:-1.5px">Benoît</div>
<div class="a" style="left:645px;top:184px;width:13px;height:13px;border:1px solid #1c5180;background:linear-gradient(135deg,#dcdcd7,#fff)"></div>
<svg class="i" style="left:313px;top:200.5px" width="12" height="15" viewBox="0 0 12 15"><path d="M0.4,13.2 C0.2,10.5 1,8.6 3,7.9 C4,7.5 5,7.5 6,7.5 C7,7.5 8,7.5 9,7.9 C11,8.6 11.8,10.5 11.6,13.2 C11.4,13.9 10.9,14 10.4,14 L1.6,14 C1.1,14 0.6,13.9 0.4,13.2 Z" fill="url(#gRed)" stroke="#7a0a0a" stroke-width="0.5"/><ellipse cx="5.6" cy="5" rx="2.6" ry="3.1" fill="url(#gFaceO)"/><path d="M2.6,4.8 C2.2,2.2 3.5,0.6 5.6,0.6 C7.7,0.6 9,2.2 8.6,4.8 C8,3.4 7,2.8 6,3.2 C5,2.6 3.6,3.2 2.6,4.8Z" fill="url(#gHairB)" stroke="#a06818" stroke-width="0.3"/><text x="0" y="0" transform="translate(5.8,13.4) scale(1.35,1)" font-family="Liberation Sans" font-weight="bold" font-size="7" fill="#ffd000" text-anchor="middle">S</text></svg>
<div class="t" style="left:355px;top:203px;font-size:12px;line-height:14px;letter-spacing:0.3px;word-spacing:-1.5px">Super_Utilisateur</div>
<div class="a" style="left:645px;top:204px;width:13px;height:13px;border:1px solid #1c5180;background:linear-gradient(135deg,#dcdcd7,#fff)"></div>
<svg class="i" style="left:317.96px;top:221px" width="9.0" height="11.700000000000001" viewBox="0 0 20 26"><path d="M3.2,11.5 C2.2,7 2.8,3 6,1.2 C8,0 12,-0.2 14.5,1 C17.2,2.5 17.8,6.5 16.8,11 Z" fill="url(#gHairB)" stroke="#a06010" stroke-width="0.6"/><ellipse cx="10.1" cy="10.2" rx="5.3" ry="6" fill="url(#gFaceO)"/><path d="M4.2,9 C4,5 6,2.6 10,2.5 C14,2.6 16,5 16,9 C15,7 14.2,6 13.5,5.5 L12.5,7.2 L11.2,5.8 L10,7.4 L8.8,5.8 L7.5,7.2 L6.6,5.8 C5.6,6.5 4.8,7.8 4.2,9 Z" fill="url(#gHairB)" stroke="#a06010" stroke-width="0.5"/><path d="M1.2,25 C0.8,21 1.5,17.5 4.5,15.8 C6,15 7.5,14.6 8.5,14.6 L12,14.6 C13.5,14.6 15,15 16.5,15.8 C19.5,17.5 20,21 19.5,25 C19.2,25.8 18.5,26 18,26 L2.5,26 C1.8,26 1.3,25.6 1.2,25 Z" fill="url(#gGreen)" stroke="#0a6a0a" stroke-width="0.8"/><path d="M8.2,15 L10.2,20.5 L12.2,15 Z" fill="#d0f0d0" stroke="#0a6a0a" stroke-width="0.5"/></svg>
<svg class="i" style="left:310.4px;top:220.95px" width="10.0" height="13.0" viewBox="0 0 20 26"><path d="M5,15 C2.5,15 0.8,13.5 1.2,11.5 C1.6,9 2.5,7 3.5,5 C4.5,2.5 6.5,1 9,1 C12.5,1 15.5,2.8 16,6 C16.5,9 16.5,12.5 15.5,14 C14.5,15 13,15 12,15 Z" fill="#0a0a0a"/><path d="M5.5,4.5 C7,2.3 11,2 13.8,4 C11.5,3.5 8,3.8 5.5,5.5 Z" fill="#8a8a8a"/><path d="M9.5,5.3 C12.3,5.3 14,7.3 14,10.3 C14,13.8 12,16.5 9.5,16.5 C7,16.5 5,13.8 5,10.3 C5,7.3 6.8,5.3 9.5,5.3 Z" fill="url(#gFace)"/><path d="M1.6,22.3 C1.6,18.5 3.4,16.1 6.5,15.7 L13,15.7 C16.4,16.1 18.8,18.5 18.8,22.3 C18.8,24.6 17.8,25.7 16,25.7 L4.4,25.7 C2.6,25.7 1.6,24.6 1.6,22.3 Z" fill="url(#gGreenD)" stroke="#0a5a0a" stroke-width="0.8"/><path d="M7.6,15.9 L10.3,23.5 L13,15.9 Z" fill="#d0f0d0"/><path d="M7.2,16 L10.3,25.2 L13.4,16" fill="none" stroke="#0a5a0a" stroke-width="0.8"/></svg>
<div class="t" style="left:355px;top:223px;font-size:12px;line-height:14px;letter-spacing:0.3px;word-spacing:-1.5px">Comptabilité</div>
<div class="a" style="left:645px;top:224px;width:13px;height:13px;border:1px solid #1c5180;background:linear-gradient(135deg,#dcdcd7,#fff)"></div>
<svg class="i" style="left:317.96px;top:241px" width="9.0" height="11.700000000000001" viewBox="0 0 20 26"><path d="M3.2,11.5 C2.2,7 2.8,3 6,1.2 C8,0 12,-0.2 14.5,1 C17.2,2.5 17.8,6.5 16.8,11 Z" fill="url(#gHairB)" stroke="#a06010" stroke-width="0.6"/><ellipse cx="10.1" cy="10.2" rx="5.3" ry="6" fill="url(#gFaceO)"/><path d="M4.2,9 C4,5 6,2.6 10,2.5 C14,2.6 16,5 16,9 C15,7 14.2,6 13.5,5.5 L12.5,7.2 L11.2,5.8 L10,7.4 L8.8,5.8 L7.5,7.2 L6.6,5.8 C5.6,6.5 4.8,7.8 4.2,9 Z" fill="url(#gHairB)" stroke="#a06010" stroke-width="0.5"/><path d="M1.2,25 C0.8,21 1.5,17.5 4.5,15.8 C6,15 7.5,14.6 8.5,14.6 L12,14.6 C13.5,14.6 15,15 16.5,15.8 C19.5,17.5 20,21 19.5,25 C19.2,25.8 18.5,26 18,26 L2.5,26 C1.8,26 1.3,25.6 1.2,25 Z" fill="url(#gGreen)" stroke="#0a6a0a" stroke-width="0.8"/><path d="M8.2,15 L10.2,20.5 L12.2,15 Z" fill="#d0f0d0" stroke="#0a6a0a" stroke-width="0.5"/></svg>
<svg class="i" style="left:310.4px;top:240.95px" width="10.0" height="13.0" viewBox="0 0 20 26"><path d="M5,15 C2.5,15 0.8,13.5 1.2,11.5 C1.6,9 2.5,7 3.5,5 C4.5,2.5 6.5,1 9,1 C12.5,1 15.5,2.8 16,6 C16.5,9 16.5,12.5 15.5,14 C14.5,15 13,15 12,15 Z" fill="#0a0a0a"/><path d="M5.5,4.5 C7,2.3 11,2 13.8,4 C11.5,3.5 8,3.8 5.5,5.5 Z" fill="#8a8a8a"/><path d="M9.5,5.3 C12.3,5.3 14,7.3 14,10.3 C14,13.8 12,16.5 9.5,16.5 C7,16.5 5,13.8 5,10.3 C5,7.3 6.8,5.3 9.5,5.3 Z" fill="url(#gFace)"/><path d="M1.6,22.3 C1.6,18.5 3.4,16.1 6.5,15.7 L13,15.7 C16.4,16.1 18.8,18.5 18.8,22.3 C18.8,24.6 17.8,25.7 16,25.7 L4.4,25.7 C2.6,25.7 1.6,24.6 1.6,22.3 Z" fill="url(#gGreenD)" stroke="#0a5a0a" stroke-width="0.8"/><path d="M7.6,15.9 L10.3,23.5 L13,15.9 Z" fill="#d0f0d0"/><path d="M7.2,16 L10.3,25.2 L13.4,16" fill="none" stroke="#0a5a0a" stroke-width="0.8"/></svg>
<div class="t" style="left:355px;top:243px;font-size:12px;line-height:14px;letter-spacing:0.3px;word-spacing:-1.5px">Dir. finance</div>
<div class="a" style="left:645px;top:244px;width:13px;height:13px;border:1px solid #1c5180;background:linear-gradient(135deg,#dcdcd7,#fff)"></div>
<div class="a" style="left:309px;top:326px;width:438px;height:1px;background:#aca899"></div>
<div class="a" style="left:309px;top:327px;width:438px;height:1px;background:#fff"></div>
<div class="a" style="left:309px;top:338px;width:438px;height:155px;border:1px solid #7f9db9;background:#fff"></div>
<div class="a" style="left:310px;top:339px;width:1px;height:153px;background:#e4e4e4"></div>
<div class="a" style="left:310px;top:339px;width:419px;height:20px;background:linear-gradient(to bottom,#ebeadb 0,#ebeadb 16px,#e2dfcd 17px,#d6d2bf 19px)"></div>
<div class="a" style="left:729px;top:339px;width:17px;height:153px;background:linear-gradient(to right,#f3f1ec,#fefefb)"></div>
<div class="a" style="left:730px;top:339px;width:15px;height:16px;background:linear-gradient(to bottom,#f4f3ee,#e4e2d8);border:1px solid #fff;border-radius:2px;box-shadow:0 1px 0 #c9c7ba"></div>
<svg class="i" style="left:0;top:0" width="770" height="534"><polyline points="733.5,349.0 737.5,345.0 741.5,349.0" fill="none" stroke="#c3c2b8" stroke-width="2.2"/></svg>
<div class="a" style="left:730px;top:475px;width:15px;height:16px;background:linear-gradient(to bottom,#f4f3ee,#e4e2d8);border:1px solid #fff;border-radius:2px;box-shadow:0 1px 0 #c9c7ba"></div>
<svg class="i" style="left:0;top:0" width="770" height="534"><polyline points="733.5,481.0 737.5,485.0 741.5,481.0" fill="none" stroke="#c3c2b8" stroke-width="2.2"/></svg>
<div class="a" style="left:600px;top:342px;width:1px;height:13px;background:#c7c5b2"></div>
<div class="a" style="left:601px;top:342px;width:1px;height:13px;background:#fff"></div>
<div class="a" style="left:728px;top:342px;width:1px;height:13px;background:#c7c5b2"></div>
<div class="a" style="left:729px;top:342px;width:1px;height:13px;background:#fff"></div>
<div class="a" style="left:310px;top:378px;width:419px;height:1px;background:#a6a6a6"></div>
<div class="a" style="left:310px;top:398px;width:419px;height:1px;background:#a6a6a6"></div>
<div class="a" style="left:310px;top:418px;width:419px;height:1px;background:#a6a6a6"></div>
<div class="a" style="left:310px;top:438px;width:419px;height:1px;background:#a6a6a6"></div>
<div class="a" style="left:310px;top:458px;width:419px;height:1px;background:#a6a6a6"></div>
<div class="a" style="left:310px;top:478px;width:419px;height:1px;background:#a6a6a6"></div>
<div class="a" style="left:601px;top:359px;width:1px;height:133px;background:#a6a6a6"></div>
<div class="t" style="left:312px;top:342px;font-size:12px;line-height:14px;letter-spacing:0.3px;word-spacing:-1.5px">Plug-in</div>
<div class="t" style="left:604px;top:342px;font-size:12px;line-height:14px;letter-spacing:0.3px;word-spacing:-1.5px">Accès</div>
<div class="t" style="left:312px;top:362px;font-size:12px;line-height:14px;letter-spacing:0.3px;word-spacing:-1.5px">4D Client Web Server</div>
<div class="a" style="left:604px;top:363px;width:13px;height:13px;border:1px solid #1c5180;background:linear-gradient(135deg,#dcdcd7,#fff)"></div>
<svg class="i" style="left:0;top:0" width="770" height="534"><polyline points="607.2,368.6 609.6,371.6 614,366.6" fill="none" stroke="#21a121" stroke-width="2.6"/></svg>
</body></html>
